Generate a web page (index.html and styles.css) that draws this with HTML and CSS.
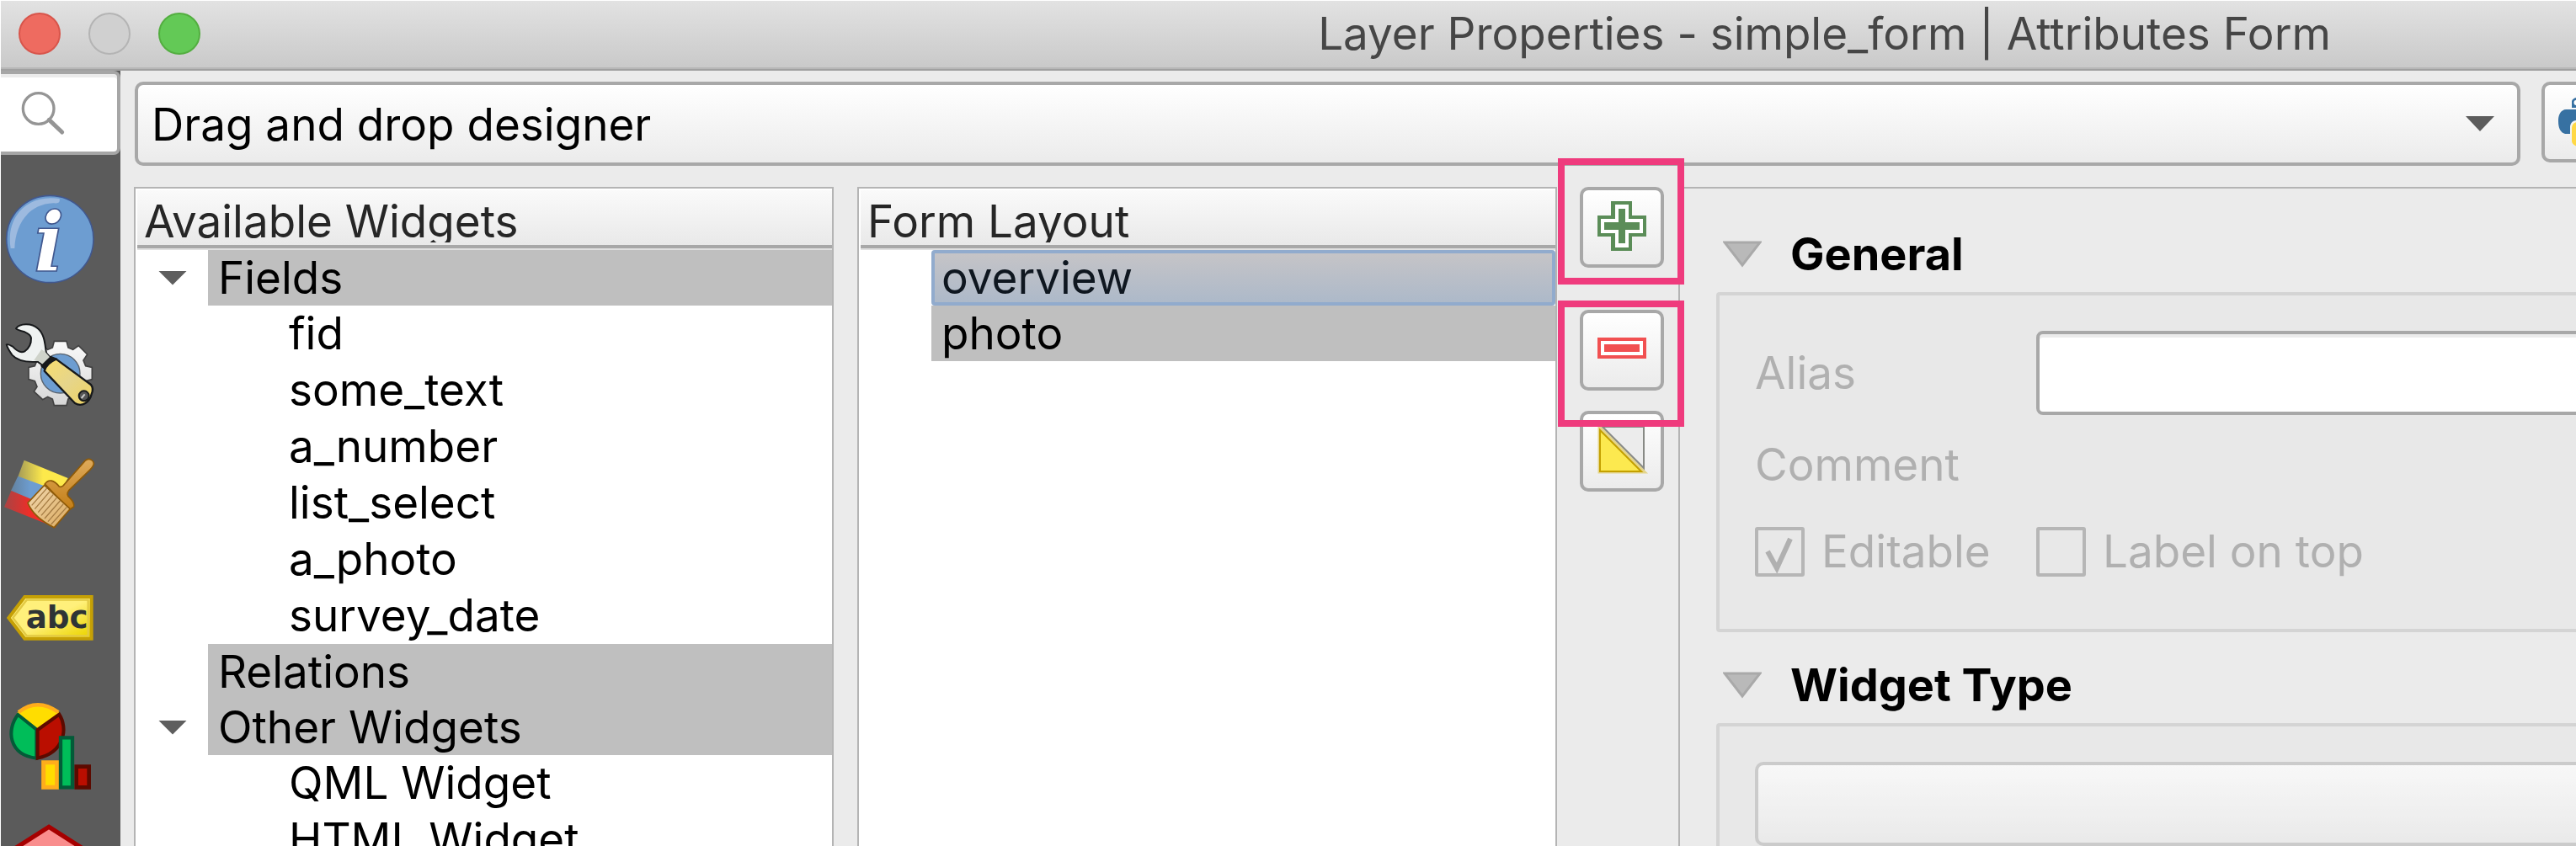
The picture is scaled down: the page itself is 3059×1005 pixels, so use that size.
FILE: index.html
```html
<!DOCTYPE html>
<html lang="en">
<head>
<meta charset="utf-8">
<title>Layer Properties - simple_form | Attributes Form</title>
<link rel="stylesheet" href="styles.css">
</head>
<body>
<div class="window">
  <header class="titlebar">
    <div class="lights">
      <button class="light light-close" aria-label="Close"></button>
      <button class="light light-min" aria-label="Minimise"></button>
      <button class="light light-zoom" aria-label="Zoom"></button>
    </div>
    <h1 class="title">Layer Properties - simple_form | Attributes Form</h1>
  </header>
  <div class="body">
    <nav class="sidebar">
      <div class="search">
        <svg class="search-icon" viewBox="70 320 165 165" aria-hidden="true"><circle cx="138" cy="386" r="55" fill="none" stroke="#959595" stroke-width="10"/><path d="M176 426L222 470" stroke="#959595" stroke-width="15" stroke-linecap="round"/></svg>
        <input class="search-input" type="search" aria-label="Search">
      </div>
      <a class="page-link" href="#information" aria-label="Information">
        <svg class="page-icon" viewBox="3 627 426 450">
          <circle cx="178" cy="852" r="155" fill="#6d9dd1" stroke="#41588f" stroke-width="5"/>
          <path d="M38 885C20 780 90 690 212 708C215 724 205 725 190 724C100 728 55 800 52 885Z" fill="#9dbadf"/>
          <text class="info-letter" x="175" y="966">i</text>
        </svg>
      </a>
      <a class="page-link" href="#source" aria-label="Source">
        <svg class="page-icon" viewBox="3 57 426 450">
          <defs><linearGradient id="gear" x1="0" y1="0" x2="0" y2="1"><stop offset="0" stop-color="#fafafa"/><stop offset="1" stop-color="#d6d6d6"/></linearGradient>
          <linearGradient id="handle" x1="0" y1="0" x2="1" y2="1"><stop offset="0" stop-color="#f8dd6c"/><stop offset=".5" stop-color="#e6d58b"/><stop offset="1" stop-color="#efd35f"/></linearGradient></defs>
          <path d="M193 196H237L243 219L260 226L280 212L311 243L297 264L305 284L328 289V332L305 338L297 358L311 380L280 410L260 396L243 402L237 425H193L187 402L170 394L152 404L121 375L132 358L124 338L102 332V289L124 284L132 264L121 243L152 212L170 226L187 219Z" fill="url(#gear)" stroke="#414141" stroke-width="5"/>
          <circle cx="215" cy="311" r="70" fill="#6d9dd1" stroke="#59636f" stroke-width="4"/>
          <path d="M57 151C70 132 112 130 135 151C160 172 160 210 165 238L182 257L158 286L134 269C105 271 65 270 43 245Q27 222 23 208Q28 205 45 215Q70 242 88 232Q112 216 111 184Q109 172 88 163Q60 156 57 151Z" fill="#eff2f1" stroke="#17191b" stroke-width="6" stroke-linejoin="round"/>
          <path d="M148 225L161 234L180 256L157 282L140 268L121 264Z" fill="#cfd3ca"/>
          <path d="M181 248L205 258L163 302L144 284Z" fill="#17191b"/>
          <path d="M200 260L324 351Q335 365 326 385C320 412 293 433 267 417L158 302Q165 275 200 260Z" fill="url(#handle)" stroke="#17191b" stroke-width="7" stroke-linejoin="round"/>
          <circle cx="299" cy="391" r="18" fill="#555" stroke="#17191b" stroke-width="6"/><path d="M290 399L302 385" stroke="#ccc" stroke-width="6"/>
        </svg>
      </a>
      <a class="page-link" href="#symbology" aria-label="Symbology">
        <svg class="page-icon" viewBox="3 507 426 450">
          <defs><linearGradient id="y"><stop offset="0" stop-color="#a59b57"/><stop offset=".5" stop-color="#fde94b"/></linearGradient>
          <linearGradient id="b"><stop offset="0" stop-color="#63829f"/><stop offset=".5" stop-color="#6d9dd1"/></linearGradient>
          <linearGradient id="r"><stop offset="0" stop-color="#a84444"/><stop offset=".5" stop-color="#ee2d28"/></linearGradient>
          <linearGradient id="wood" x1="0" y1="0" x2="0" y2="1"><stop offset="0" stop-color="#deaa5b"/><stop offset="1" stop-color="#c47e15"/></linearGradient>
          <linearGradient id="hair" x1="0" y1="0" x2="1" y2="1"><stop offset="0" stop-color="#f2dab2"/><stop offset="1" stop-color="#dba95d"/></linearGradient></defs>
          <path d="M86 620L242 684L210 740L64 679Z" fill="url(#y)"/><path d="M64 677L180 720L130 770L39 729Z" fill="url(#b)"/><path d="M40 729L110 758L200 860L15 787Z" fill="url(#r)"/>
          <path d="M160 705C173 686 192 690 211 714Q222 718 231 704L303 622C318 609 338 622 333 638Q330 645 320 655L246 727Q233 744 249 755Q266 772 263 786L247 797Z" fill="url(#wood)" stroke="#8e5a08" stroke-width="5"/>
          <path d="M158 709L250 794L193 860Q120 824 99 772Z" fill="url(#hair)" stroke="#8e5a08" stroke-width="5"/>
          <path d="M168 719L113 781M178 731L124 794M190 742L136 806M202 754L147 817M214 765L159 828M226 776L171 839M238 787L182 849" stroke="#a57c44" stroke-width="4"/>
        </svg>
      </a>
      <a class="page-link" href="#labels" aria-label="Labels">
        <svg class="page-icon" viewBox="3 -33 426 450">
          <defs><linearGradient id="tag" x1="0" y1="0" x2="1" y2="1"><stop offset=".5" stop-color="#fff07b"/><stop offset=".95" stop-color="#ecd500"/></linearGradient></defs>
          <path d="M31 192L88 117H326V266H88Z" fill="url(#tag)" stroke="#c5a005" stroke-width="12"/>
          <path d="M46 192L95 128H314V256H95Z" fill="none" stroke="#e2c944" stroke-width="7"/>
          <text class="tag-text" x="92" y="229">abc</text>
        </svg>
      </a>
      <a class="page-link" href="#diagrams" aria-label="Diagrams">
        <svg class="page-icon" viewBox="3 417 426 450">
          <path d="M133 590L60 531Q133 467 212 530Z" fill="#fd0"/><path d="M66 528Q133 475 208 528" fill="none" stroke="#ffad1c" stroke-width="13"/>
          <path d="M130 590L64 537C22 590 30 680 130 692Z" fill="#00bd59" stroke="#035b38" stroke-width="12"/>
          <path d="M134 591L211 536C243 585 230 672 134 692Z" fill="#ba0e00" stroke="#5c0a00" stroke-width="12"/>
          <path d="M155 707H203V796H155Z" fill="#fd0" stroke="#ffad1c" stroke-width="15"/>
          <path d="M272 722H317V796H272Z" fill="#ba0e00" stroke="#5c0a00" stroke-width="14"/>
          <path d="M216 619H258V796H216Z" fill="#00bd59" stroke="#035b38" stroke-width="13"/>
        </svg>
      </a>
      <a class="page-link" href="#view3d" aria-label="3D View">
        <svg class="page-icon" viewBox="3 867 426 450"><path d="M174 937L320 1030V1200H28V1030Z" fill="#f98d8d" stroke="#a60000" stroke-width="16"/></svg>
      </a>
    </nav>
    <main class="main">
      <div class="toolbar">
        <div class="select-wrap">
          <select class="select" aria-label="Form type"><option>Drag and drop designer</option></select>
          <svg class="select-arrow" viewBox="0 0 34 18" aria-hidden="true"><path d="M0 0H34L17 18Z" fill="#5c5c5c"/></svg>
        </div>
        <button class="tool python" aria-label="Python init function">
          <svg class="python-icon" viewBox="0 0 60 60"><path d="M29 0C15 0 16 6 16 6V13H30V15H10S0 14 0 29S9 44 9 44H14V36S14 28 22 28H37S44 28 44 20V8S45 0 29 0Z" fill="#3771a2"/><circle cx="21.500" cy="7" r="3" fill="#fff"/><path d="M31 60C45 60 44 54 44 54V47H30V45H50S60 46 60 31S51 16 51 16H46V24S46 30 38 30H23S16 30 16 38V52S15 60 31 60Z" fill="#ffd845"/></svg>
        </button>
      </div>
      <div class="editor">
        <section class="tree">
          <h2 class="tree-head"><span class="tree-title">Available Widgets</span></h2>
          <ul class="rows">
            <li class="group"><button class="twisty" aria-label="Collapse Fields"></button><span class="cell">Fields</span></li>
            <li class="leaf">fid</li>
            <li class="leaf">some_text</li>
            <li class="leaf">a_number</li>
            <li class="leaf">list_select</li>
            <li class="leaf">a_photo</li>
            <li class="leaf">survey_date</li>
            <li class="group"><span class="cell">Relations</span></li>
            <li class="group"><button class="twisty" aria-label="Collapse Other Widgets"></button><span class="cell">Other Widgets</span></li>
            <li class="leaf">QML Widget</li>
            <li class="leaf">HTML Widget</li>
          </ul>
        </section>
        <section class="tree form-tree">
          <h2 class="tree-head"><span class="tree-title">Form Layout</span></h2>
          <ul class="rows">
            <li class="group"><span class="cell cell-selected">overview</span></li>
            <li class="group"><span class="cell">photo</span></li>
          </ul>
        </section>
        <div class="actions">
          <div class="slot"><button class="tool" aria-label="Add tab or group">
            <svg class="tool-icon" viewBox="0 0 58 58"><path d="M16 0H41V17H58V42H41V59H16V42H0V17H16Z" fill="#5b8d58"/><path d="M21 4H37V21H54V38H37V55H21V38H4V21H21Z" fill="#fff"/><path d="M25 9H33V25H50V34H33V50H25V34H8V25H25Z" fill="#5b8d58"/></svg>
          </button><span class="marker"></span></div>
          <div class="slot"><button class="tool" aria-label="Remove">
            <svg class="tool-icon" viewBox="0 0 58 58"><path d="M0 16H58V41H0Z" fill="#f15051"/><path d="M4 20H54V37H4Z" fill="#fff"/><path d="M8 24H50V33H8Z" fill="#f15051"/></svg>
          </button><span class="marker"></span></div>
          <div class="slot"><button class="tool" aria-label="Invert selection">
            <svg class="tool-icon" viewBox="0 0 58 58"><path d="M3 4L54 55H3Z" fill="none" stroke="#e4d58b" stroke-width="5"/><path d="M3 6L52 55H3Z" fill="#fce94f" stroke="#c4a000" stroke-width="2"/><path d="M6 2H55V51Z" fill="#ececec" stroke="#888a85" stroke-width="2"/></svg>
          </button></div>
        </div>
        <section class="details">
          <h2 class="group-title"><svg class="fold" viewBox="0 0 46 32" aria-hidden="true"><path d="M2 2H44L23 29Z" fill="#b9b9b9" stroke="#a9a9a9" stroke-width="3"/></svg>General</h2>
          <div class="group-box general">
            <label class="field-label" for="alias">Alias</label>
            <input class="field" id="alias" type="text">
            <span class="field-label comment">Comment</span>
            <label class="check"><input class="box" type="checkbox" checked disabled>Editable</label>
            <label class="check"><input class="box" type="checkbox" disabled>Label on top</label>
          </div>
          <h2 class="group-title"><svg class="fold" viewBox="0 0 46 32" aria-hidden="true"><path d="M2 2H44L23 29Z" fill="#b9b9b9" stroke="#a9a9a9" stroke-width="3"/></svg>Widget Type</h2>
          <div class="group-box">
            <select class="select select-disabled" aria-label="Widget type" disabled></select>
          </div>
        </section>
      </div>
    </main>
  </div>
</div>
</body>
</html>
```
FILE: styles.css
```css
* { box-sizing: border-box; }
body {
  margin: 0;
  background: #fff;
  color: #000;
  font: 430 53px/66px Inter, "Liberation Sans", sans-serif;
}
button, input, select { font: inherit; color: inherit; margin: 0; }
h1, h2, ul { margin: 0; padding: 0; font: inherit; list-style: none; }
svg { display: block; }

.window {
  display: flex;
  flex-direction: column;
  height: 100vh;
  padding: 1px 0 0 1px;
  overflow: hidden;
}
.titlebar {
  display: flex;
  flex: none;
  align-items: center;
  height: 83px;
  padding-left: 21px;
  background: linear-gradient(#e2e2e2, #c9c9c9);
  border-bottom: 2px solid #a0a0a0;
  box-shadow: inset 0 -2px #b7b7b7;
}
.lights { display: flex; gap: 33px; padding-bottom: 4px; }
.light { width: 50px; height: 50px; padding: 0; border: 2px solid; border-radius: 50%; }
.light-close { background: #ee6b60; border-color: #d8554b; }
.light-min { background: #d0d0d0; border-color: #b4b4b4; }
.light-zoom { background: #63c956; border-color: #53ae40; }
.title { flex: 1; padding: 0 0 4px 1036px; color: #464646; text-align: center; white-space: nowrap; }

.body { display: flex; flex: 1; min-height: 0; background: #ebebeb; }
.sidebar { flex: none; width: 142px; background: #5b5b5b; }
.search {
  display: flex;
  align-items: center;
  height: 100px;
  margin-bottom: 25px;
  padding-left: 22px;
  background: #fff;
  border: solid #a6a6a6;
  border-width: 4px 4px 4px 0;
  border-radius: 0 8px 8px 0;
  box-shadow: inset 0 4px #ebebeb;
}
.search-icon { flex: none; width: 55px; height: 55px; }
.search-input { flex: 1; width: 0; padding: 0; border: 0; background: none; outline: 0; }
.page-link { display: block; }
.page-icon { width: 142px; height: 150px; }
.info-letter { font: italic 700 290px "DejaVu Serif", serif; fill: #fff; stroke: #41588f; stroke-width: 5px; text-anchor: middle; }
.tag-text { font: 700 112px "DejaVu Sans", sans-serif; fill: #2e3436; }

.main { display: flex; flex: 1; flex-direction: column; min-width: 0; padding: 13px 0 0 16px; }
.toolbar { display: flex; flex: none; gap: 25px; }
.select-wrap { display: grid; flex: 1; align-items: center; margin-left: 1px; }
.select {
  grid-area: 1 / 1;
  width: 100%;
  height: 100px;
  padding: 2px 16px 0;
  appearance: none;
  background: linear-gradient(#fff, #ebebeb);
  border: 4px solid #a8a8a8;
  border-radius: 10px;
}
.select-disabled { border-color: #c0c0c0; }
.select-arrow { grid-area: 1 / 1; justify-self: end; width: 34px; height: 18px; margin-right: 31px; pointer-events: none; }
.tool {
  display: flex;
  align-items: center;
  justify-content: center;
  width: 100px;
  height: 96px;
  padding: 0 0 4px;
  background: linear-gradient(#fff, #ebebeb);
  border: 4px solid #a8a8a8;
  border-radius: 10px;
}
.tool-icon { width: 58px; height: 58px; overflow: visible; }
.python { flex: none; margin-right: -59px; padding: 0; }
.python-icon { width: 60px; height: 60px; }

.editor {
  display: grid;
  flex: 1;
  grid-template-columns: 831fr 859fr 144px 1066fr;
  min-height: 0;
  margin-top: 25px;
}
.tree {
  min-width: 0;
  padding: 2px 0 0 2px;
  overflow: hidden;
  background: #fff;
  border: 2px solid #b4b4b4;
  border-bottom: 0;
}
.form-tree { margin-left: 28px; }
.tree-head {
  height: 71px;
  padding: 0 8px;
  background: linear-gradient(#fafafa, #e8e8e8);
  border-bottom: 2px solid #e0e0e0;
  box-shadow: inset 0 -4px #a8a8a8;
  color: #262626;
}
.tree-title { display: block; height: 62px; padding-top: 4px; overflow: hidden; }
.group { display: grid; grid-template-columns: 84px 1fr; align-items: center; height: 66px; }
.leaf { height: 67px; padding-left: 180px; }
.twisty { width: 34px; height: 17px; margin-left: 25px; padding: 0; border: 0; background: #5e5e5e; clip-path: polygon(0 0, 100% 0, 50% 100%); }
.cell { grid-column: 2; height: 66px; padding-left: 12px; background: #bfbfbf; }
.cell-selected {
  color: #0f1720;
  line-height: 58px;
  padding-left: 8px;
  background: linear-gradient(#c5c4c7, #adb9c9);
  border: 4px solid #91abcd;
  border-radius: 4px;
}
.actions { display: flex; flex-direction: column; align-items: flex-start; padding-left: 27px; }
.slot { position: relative; }
.slot:nth-child(1) { margin-bottom: 50px; }
.slot:nth-child(2) { margin-bottom: 24px; }
.marker { position: absolute; z-index: 1; left: -26px; width: 150px; height: 150px; border: 8px solid #ef3b7d; pointer-events: none; }
.slot:nth-child(1) .marker { top: -34px; }
.slot:nth-child(2) .marker { top: -11px; }

.details { min-width: 0; padding: 42px 0 0 43px; border: solid #b4b4b4; border-width: 2px 0 0 2px; }
.group-title { display: flex; align-items: center; gap: 34px; height: 81px; padding: 0 0 10px 8px; font-weight: 700; font-size: 54px; }
.fold { width: 46px; height: 32px; }
.group-box { height: 404px; margin-right: -60px; padding: 42px 0 42px 42px; background: #e8e8e8; border: 4px solid #d4d4d4; border-radius: 4px; }
.group-box + .group-title { margin-top: 27px; }
.general { display: grid; grid-template-columns: 334px 1fr; grid-template-rows: 100px 118px 88px; align-items: center; color: #b0b0b0; }
.field {
  width: 100%;
  height: 100px;
  padding: 0 12px;
  background: #fff;
  border: 4px solid #a8a8a8;
  border-radius: 8px;
  box-shadow: inset 0 4px #ebebeb;
  color: #000;
}
.comment { grid-column: 1 / 3; }
.check { display: flex; align-items: center; gap: 20px; white-space: nowrap; }
.box { flex: none; width: 59px; height: 59px; appearance: none; background: #e8e8e8; border: 4px solid #b6b6b6; border-radius: 3px; }
.box:checked { background: #e8e8e8 url("data:image/svg+xml,%3Csvg xmlns='http://www.w3.org/2000/svg' viewBox='0 0 51 51'%3E%3Cpath d='M11 25L22 45L38 10' fill='none' stroke='%23b0b0b0' stroke-width='6'/%3E%3C/svg%3E"); }
```
